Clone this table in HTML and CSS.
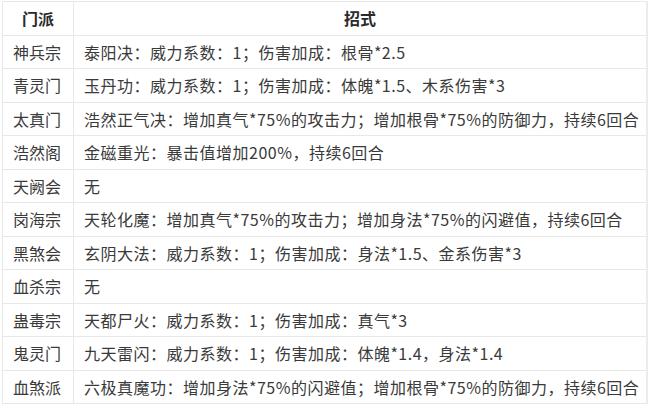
FILE: index.html
```html
<!DOCTYPE html>
<html lang="zh">
<head>
<meta charset="utf-8">
<link rel="stylesheet" href="styles.css">
</head>
<body>
<table class="skills">
  <thead>
    <tr><th class="sect">门派</th><th class="move">招式</th></tr>
  </thead>
  <tbody>
    <tr><td>神兵宗</td><td>泰阳决：威力系数：1；伤害加成：根骨*2.5</td></tr>
    <tr><td>青灵门</td><td>玉丹功：威力系数：1；伤害加成：体魄*1.5、木系伤害*3</td></tr>
    <tr><td>太真门</td><td>浩然正气决：增加真气*75%的攻击力；增加根骨*75%的防御力，持续6回合</td></tr>
    <tr><td>浩然阁</td><td>金磁重光：暴击值增加200%，持续6回合</td></tr>
    <tr><td>天阙会</td><td>无</td></tr>
    <tr><td>岗海宗</td><td>天轮化魔：增加真气*75%的攻击力；增加身法*75%的闪避值，持续6回合</td></tr>
    <tr><td>黑煞会</td><td>玄阴大法：威力系数：1；伤害加成：身法*1.5、金系伤害*3</td></tr>
    <tr><td>血杀宗</td><td>无</td></tr>
    <tr><td>蛊毒宗</td><td>天都尸火：威力系数：1；伤害加成：真气*3</td></tr>
    <tr><td>鬼灵门</td><td>九天雷闪：威力系数：1；伤害加成：体魄*1.4，身法*1.4</td></tr>
    <tr><td>血煞派</td><td>六极真魔功：增加身法*75%的闪避值；增加根骨*75%的防御力，持续6回合</td></tr>
  </tbody>
</table>
</body>
</html>
```
FILE: styles.css
```css
html, body {
  background: #ffffff;
}
body {
  margin: 1px 0 0 2px;
  font-family: "Noto Sans CJK SC", "Noto Sans", sans-serif;
  font-size: 16px;
  color: #3a3a3a;
}
.skills {
  border-collapse: collapse;
  width: 646px;
  table-layout: fixed;
}
.skills th,
.skills td {
  border: 1px solid #e8e8e8;
  height: 33.5px;
  padding: 0 10px;
  line-height: 22px;
  white-space: nowrap;
  text-align: left;
  box-sizing: border-box;
}
.skills td:last-child {
  letter-spacing: 0.5px;
}
.skills th {
  font-weight: bold;
  color: #2b2b2b;
  text-align: center;
}
.skills .sect {
  width: 71px;
}
.skills td:last-child,
.skills th:last-child {
  border-right: 2px solid #ececec;
}
```
